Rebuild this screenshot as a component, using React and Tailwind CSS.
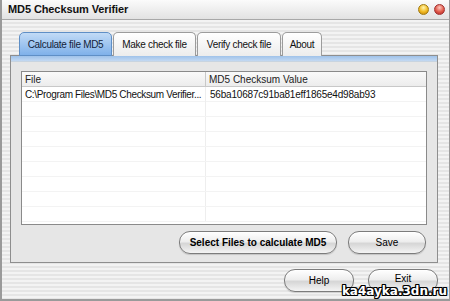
import React from "react";

const tabs = ["Calculate file MD5", "Make check file", "Verify check file", "About"];
const tabWidths = ["w-[93px]", "w-[83px]", "w-[84px]", "w-[40px]"];

function PillButton({ className, children, bold }) {
  return (
    <button
      className={
        "flex items-center justify-center rounded-[11px] border border-[#7c7c7c] bg-[linear-gradient(#ffffff,#eeeeee_45%,#d6d6d6_55%,#f4f4f4)] text-[10px] text-black shadow-[inset_0_1px_0_#fff,0_1px_1px_rgba(0,0,0,0.15)] " +
        (bold ? "font-bold " : "") +
        className
      }
    >
      {children}
    </button>
  );
}

export default function App() {
  const rows = [
    ["C:\\Program Files\\MD5 Checksum Verifier...", "56ba10687c91ba81eff1865e4d98ab93"],
  ];
  const empty = Array.from({ length: 8 });

  return (
    <div className="relative w-[450px] h-[301px] overflow-hidden border-l-2 border-b-2 border-r border-[#9a9a9a] bg-[repeating-linear-gradient(#f3f3f3_0_2px,#e5e5e5_2px_4px)] font-['Liberation_Sans',Arial,sans-serif] text-[#111]">
      {/* Title bar */}
      <div className="flex h-[20px] items-center justify-between border-b border-[#a8a8a8] bg-[linear-gradient(#fbfbfb,#e2e2e2)] pl-[6px] pr-[4px]">
        <span className="text-[11px] font-bold tracking-[-0.1px] text-[#111]">MD5 Checksum Verifier</span>
        <div className="flex gap-[5px]">
          <span className="h-[11px] w-[11px] rounded-full border border-[#a07a10] bg-[radial-gradient(circle_at_50%_30%,#fff6b0,#f0b820_55%,#c08010)]" />
          <span className="h-[11px] w-[11px] rounded-full border border-[#a03030] bg-[radial-gradient(circle_at_50%_30%,#ffc8c0,#e05848_55%,#b02828)]" />
        </div>
      </div>

      {/* Tabs */}
      <div className="ml-[8px] mt-[12px] w-[428px]">
        <div className="flex pl-[9px] gap-[1px]">
          {tabs.map((t, i) => (
            <div
              key={t}
              className={
                "relative z-10 -mb-px flex h-[24px] items-center justify-center rounded-t-[5px] border text-[10px] tracking-[-0.3px] " +
                tabWidths[i] +
                (i === 0
                  ? " border-[#5f8fc6] bg-[linear-gradient(#c2dbf6,#7fb1ea)] text-[#13233a]"
                  : " border-b-0 border-[#9c9c9c] bg-[linear-gradient(#ffffff,#ececec)] text-[#111]")
              }
            >
              {t}
            </div>
          ))}
        </div>

        {/* Panel */}
        <div className="h-[208px] border border-[#8e8e8e] bg-[#e6e6e6]">
          <div className="h-[6px] border-b border-[#c8d4e0] bg-[linear-gradient(#9fc2ea,#c3d9f2)]" />
          <div className="px-[10px] pt-[9px]">
            {/* List */}
            <div className="h-[154px] overflow-hidden border border-[#8a8a8a] bg-white text-[10px]">
              <div className="flex h-[15px] items-center border-b border-[#c8c8c8] bg-[linear-gradient(#fafafa,#ececec)] text-[#222]">
                <div className="w-[184px] border-r border-[#c8c8c8] pl-[3px] leading-[15px]">File</div>
                <div className="pl-[3px]">MD5 Checksum Value</div>
              </div>
              {rows.map(([f, h]) => (
                <div key={f} className="flex h-[15px] items-center border-b border-[#f3f3f3]">
                  <div className="w-[184px] shrink-0 overflow-hidden whitespace-nowrap border-r border-[#eeeeee] pl-[3px] leading-[15px] tracking-[-0.35px]">{f}</div>
                  <div className="whitespace-nowrap pl-[4px] tracking-[-0.2px]">{h}</div>
                </div>
              ))}
              {empty.map((_, i) => (
                <div key={i} className="flex h-[15px] border-b border-[#f3f3f3]">
                  <div className="w-[184px] border-r border-[#eeeeee]" />
                </div>
              ))}
            </div>

            {/* Buttons */}
            <div className="mt-[6px] flex justify-end gap-[11px] pr-[1px]">
              <PillButton bold className="h-[23px] w-[158px]">
                Select Files to calculate MD5
              </PillButton>
              <PillButton className="h-[23px] w-[78px]">Save</PillButton>
            </div>
          </div>
        </div>
      </div>

      {/* Bottom buttons */}
      <div className="mt-[6px] flex justify-end gap-[14px] pr-[11px]">
        <PillButton className="h-[23px] w-[70px]">Help</PillButton>
        <PillButton className="h-[23px] w-[70px] pb-[4px]">Exit</PillButton>
      </div>

      {/* Watermark */}
      <div className="absolute bottom-0 right-[2px] text-[12px] font-bold leading-[15px] text-white [text-shadow:1px_0_0_#000,-1px_0_0_#000,0_1px_0_#000,0_-1px_0_#000,1px_1px_0_#000,-1px_-1px_0_#000,1px_-1px_0_#000,-1px_1px_0_#000] font-['DejaVu_Sans',sans-serif]">
        ka4ayka.3dn.ru
      </div>
    </div>
  );
}
